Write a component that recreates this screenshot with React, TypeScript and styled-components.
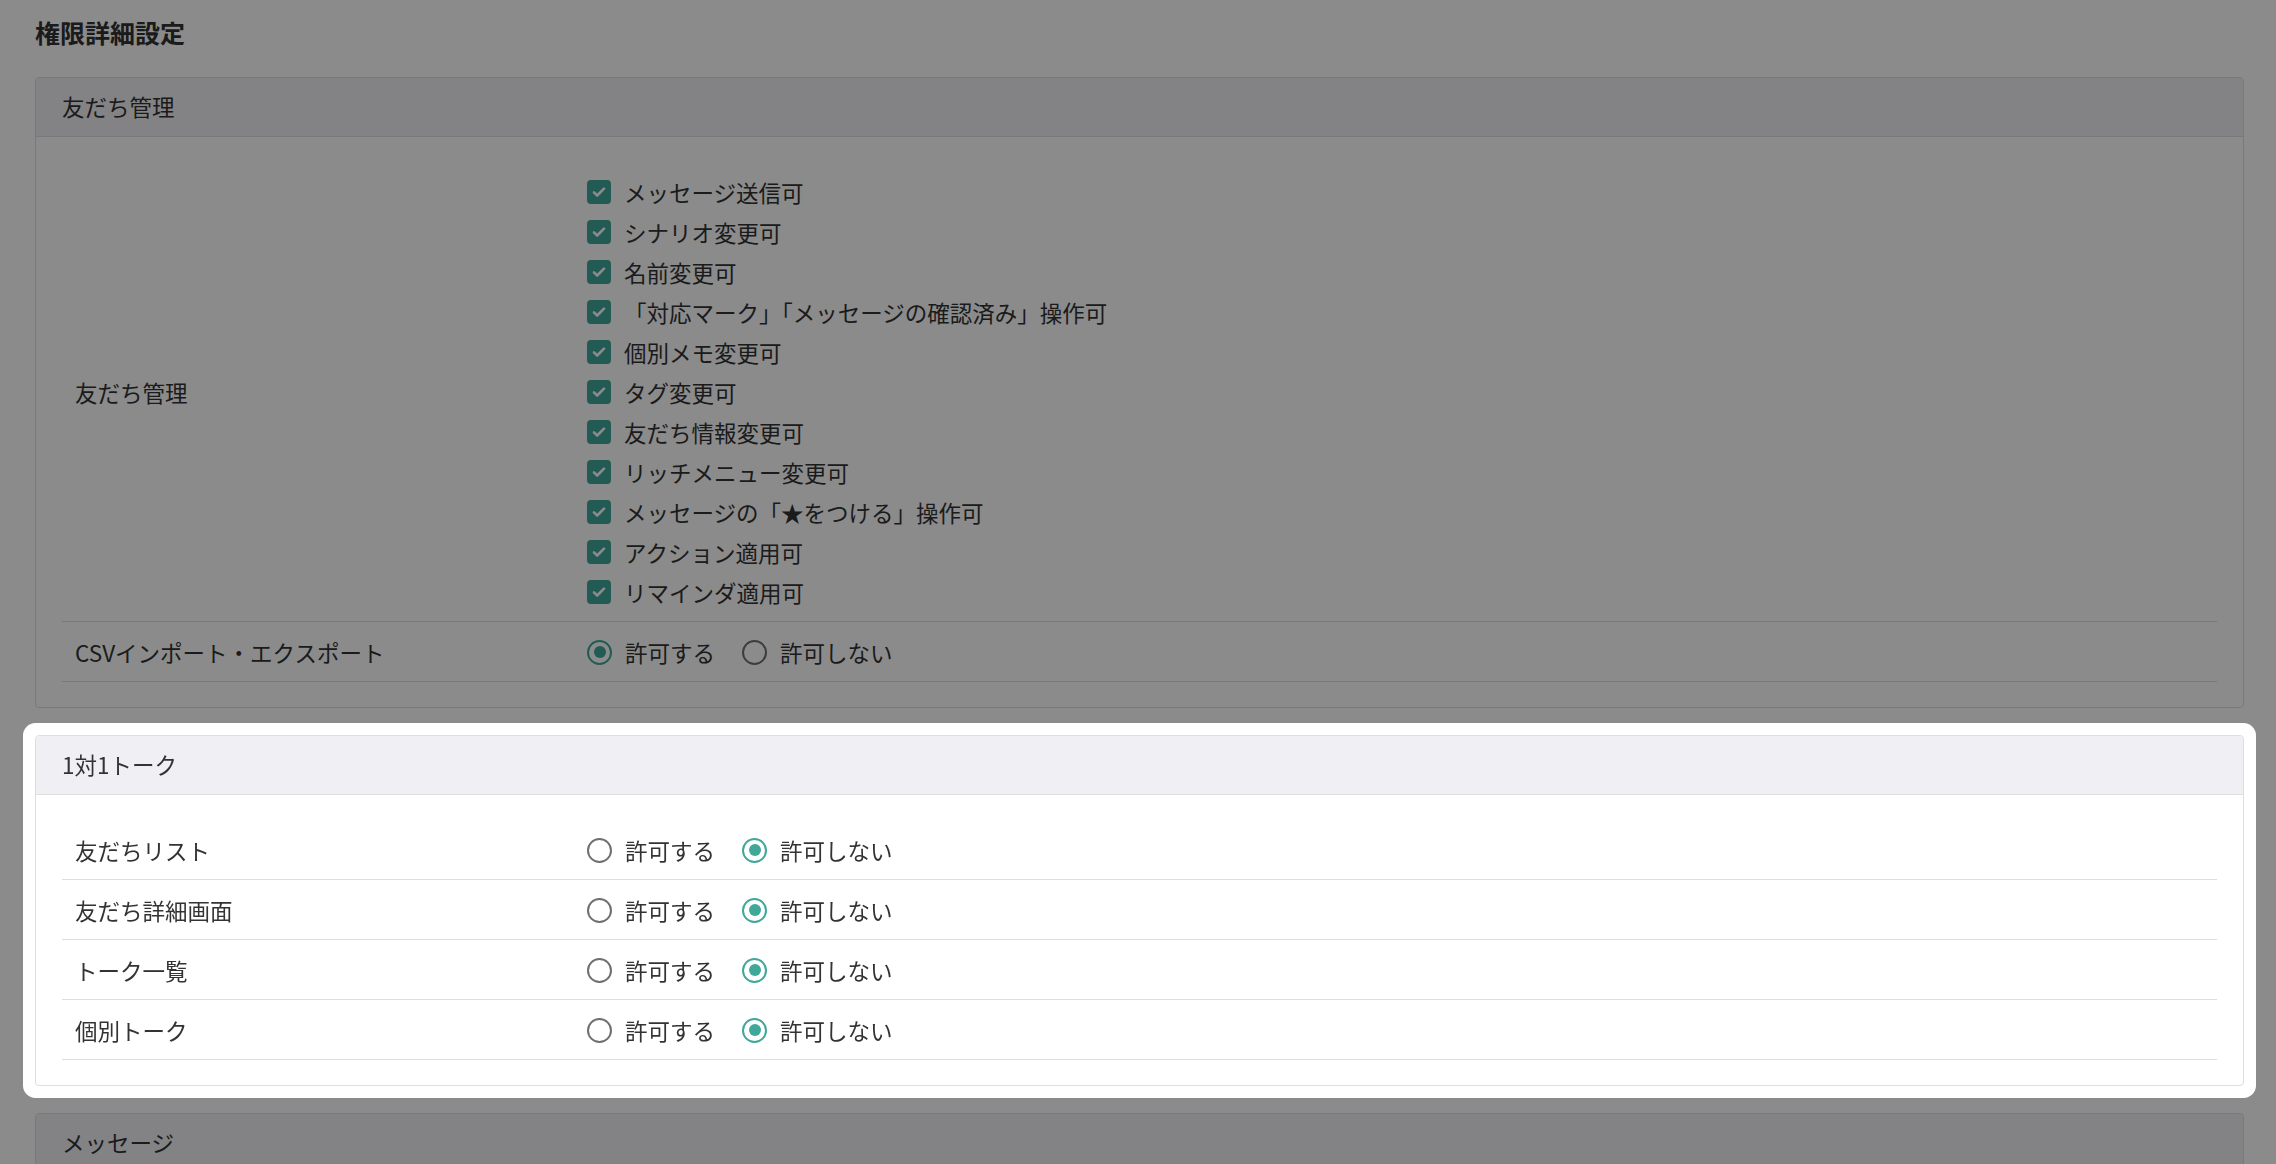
import styled, { createGlobalStyle, css } from 'styled-components';

const TEAL = '#3fa899';

const GlobalStyle = createGlobalStyle`
  html, body {
    margin: 0;
    overflow: hidden;
    background: #fff;
  }
  body {
    font-family: 'Noto Sans CJK JP', 'Noto Sans', sans-serif;
    color: #333;
  }
`;

const Page = styled.main`
  padding: 17px 32px 0 35px;
`;

const Title = styled.h1`
  margin: 0 0 30px;
  font-size: 25px;
  line-height: 30px;
  font-weight: 700;
  color: #333;
`;

const Backdrop = styled.div`
  position: fixed;
  inset: 0;
  background: rgba(0, 0, 0, 0.455);
  z-index: 1;
`;

const Card = styled.section<{ $focus?: boolean }>`
  border: 1px solid #dedede;
  border-radius: 4px;
  background: #fff;
  margin-bottom: 27px;

  ${(p) =>
    p.$focus &&
    css`
      position: relative;
      z-index: 2;
      box-shadow: 0 0 0 12px #fff;
    `}
`;

const CardHeader = styled.div`
  display: flex;
  align-items: center;
  box-sizing: border-box;
  height: 59px;
  padding: 0 26px 2px;
  background: #f0f0f4;
  border-bottom: 1px solid #dedede;
  border-radius: 4px 4px 0 0;
  font-size: 22.5px;
`;

const CardBody = styled.div`
  padding: 25px 26px 25px;
`;

const Row = styled.div`
  display: grid;
  grid-template-columns: 512px 1fr;
  align-items: center;
  min-height: 40px;
  padding: 10px 13px 9px;
  border-bottom: 1px solid #dddddd;
`;

const Label = styled.div`
  font-size: 22.5px;
  line-height: 40px;
`;

const CheckList = styled.ul`
  list-style: none;
  margin: 0;
  padding: 0;
`;

const CheckItem = styled.li`
  display: flex;
  align-items: center;
  gap: 13px;
  height: 40px;
  font-size: 22.5px;
`;

const CheckBox = styled.span`
  display: flex;
  align-items: center;
  justify-content: center;
  width: 24px;
  height: 24px;
  border-radius: 4px;
  background: ${TEAL};
  flex-shrink: 0;
`;

const RadioGroup = styled.div`
  display: flex;
  align-items: center;
  gap: 27px;
  height: 40px;
`;

const RadioOption = styled.label`
  display: flex;
  align-items: center;
  gap: 13px;
  font-size: 22.5px;
`;

const RadioMark = styled.span<{ $on: boolean }>`
  display: flex;
  align-items: center;
  justify-content: center;
  box-sizing: border-box;
  width: 25px;
  height: 25px;
  border-radius: 50%;
  border: 2px solid ${(p) => (p.$on ? TEAL : '#707070')};
  flex-shrink: 0;

  &::after {
    content: '';
    width: 12px;
    height: 12px;
    border-radius: 50%;
    background: ${(p) => (p.$on ? TEAL : 'transparent')};
  }
`;

const CheckIcon = () => (
  <svg width="16" height="16" viewBox="0 0 16 16" fill="none">
    <path d="M3 8.4l3.2 3.1L13 4.7" stroke="#fff" strokeWidth="2.6" strokeLinecap="round" strokeLinejoin="round" />
  </svg>
);

const Permit = ({ allow }: { allow: boolean }) => (
  <RadioGroup>
    <RadioOption>
      <RadioMark $on={allow} />
      許可する
    </RadioOption>
    <RadioOption>
      <RadioMark $on={!allow} />
      許可しない
    </RadioOption>
  </RadioGroup>
);

const friendPerms = [
  'メッセージ送信可',
  'シナリオ変更可',
  '名前変更可',
  '「対応マーク」「メッセージの確認済み」操作可',
  '個別メモ変更可',
  'タグ変更可',
  '友だち情報変更可',
  'リッチメニュー変更可',
  'メッセージの「★をつける」操作可',
  'アクション適用可',
  'リマインダ適用可',
];

const talkPerms = ['友だちリスト', '友だち詳細画面', 'トーク一覧', '個別トーク'];

const App = () => {
  return (
    <>
      <GlobalStyle />
      <Backdrop />
      <Page>
        <Title>権限詳細設定</Title>

        <Card>
          <CardHeader>友だち管理</CardHeader>
          <CardBody>
            <Row>
              <Label>友だち管理</Label>
              <CheckList>
                {friendPerms.map((name) => (
                  <CheckItem key={name}>
                    <CheckBox>
                      <CheckIcon />
                    </CheckBox>
                    {name}
                  </CheckItem>
                ))}
              </CheckList>
            </Row>
            <Row>
              <Label>CSVインポート・エクスポート</Label>
              <Permit allow />
            </Row>
          </CardBody>
        </Card>

        <Card $focus>
          <CardHeader>1対1トーク</CardHeader>
          <CardBody>
            {talkPerms.map((name) => (
              <Row key={name}>
                <Label>{name}</Label>
                <Permit allow={false} />
              </Row>
            ))}
          </CardBody>
        </Card>

        <Card>
          <CardHeader>メッセージ</CardHeader>
          <CardBody />
        </Card>
      </Page>
    </>
  );
};

export default App;
